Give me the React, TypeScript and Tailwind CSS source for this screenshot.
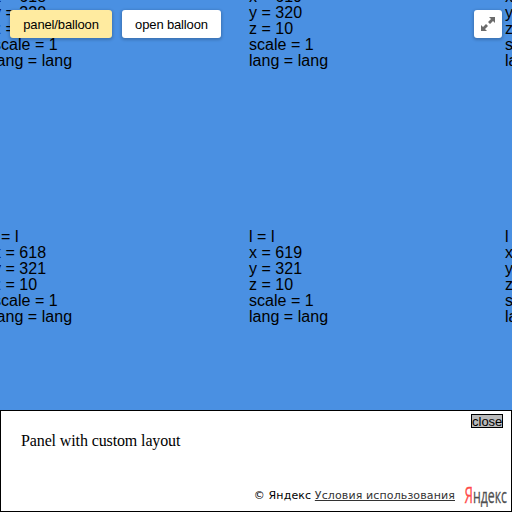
const columns = [618, 619, 620];
const rows = [320, 321];

function Tile({ x, y }: { x: number; y: number }) {
  return (
    <div className="h-64 w-64 whitespace-nowrap text-[16px] leading-4 tracking-[0.03px]">
      <div>l = l</div>
      <div>x = {x}</div>
      <div>y = {y}</div>
      <div>z = 10</div>
      <div>scale = 1</div>
      <div>lang = lang</div>
    </div>
  );
}

function MapTiles() {
  return (
    <div className="absolute inset-0 overflow-hidden">
      <div className="-mt-[27px] -ml-[7px] grid w-[768px] grid-cols-3">
        {rows.map((y) => columns.map((x) => <Tile key={`${x}-${y}`} x={x} y={y} />))}
      </div>
    </div>
  );
}

const buttonBase =
  "h-7 rounded-[3px] text-[13px] tracking-[-0.14px] shadow-[0_1px_3px_1px_rgba(0,0,0,0.2)]";

function Logo() {
  return (
    <svg width="44" height="24" viewBox="0 0 44 24" className="block">
      <g fontFamily="Open Sans, sans-serif">
        <text x="0.5" y="16.5" fontSize="21" fill="#ff4b4b" stroke="#ff4b4b" strokeWidth="0.3" textLength="8.5" lengthAdjust="spacingAndGlyphs">Я</text>
        <text x="9" y="16.5" fontSize="19.5" fill="#505050" stroke="#505050" strokeWidth="0.3" textLength="34" lengthAdjust="spacingAndGlyphs">ндекс</text>
      </g>
    </svg>
  );
}

export default function App() {
  return (
    <div className="relative flex h-[512px] w-[512px] flex-col justify-between overflow-hidden bg-[#4a90e2] font-['Liberation_Sans',Arial,sans-serif] text-black">
      <MapTiles />
      <div className="relative flex items-start gap-[10px] p-[10px]">
        <button className={`${buttonBase} w-[102px] bg-[#ffeba0] leading-[30px]`}>panel/balloon</button>
        <button className={`${buttonBase} w-[99px] bg-white leading-[30px]`}>open balloon</button>
        <button aria-label="Fullscreen" className={`${buttonBase} ml-auto flex w-7 items-center justify-center bg-white`}>
          <svg width="16" height="16" viewBox="0 0 16 16" fill="#6b6b6b">
            <path d="M9 1h6v6l-2-2-3 3-2-2 3-3zM1 9l2 2 3-3 2 2-3 3 2 2H1z" />
          </svg>
        </button>
      </div>
      <div className="relative flex h-[102px] flex-col justify-between border border-black bg-white">
        <div className="flex items-start justify-between">
          <div className="mt-[21px] ml-5 font-['Liberation_Serif',serif] text-[16px] leading-[18px] tracking-[-0.12px]">Panel with custom layout</div>
          <button className="mt-[3px] mr-2 h-[14px] w-8 border border-black bg-[#bbb] text-[13px] leading-[14px]">close</button>
        </div>
        <div className="flex items-end justify-end">
          <div className="mr-[9px] mb-[8px] whitespace-nowrap font-['DejaVu_Sans',sans-serif] text-[11px] leading-[14px] tracking-[0.12px]">
            © Яндекс <a className="text-[#333] underline">Условия использования</a>
          </div>
          <div className="mr-[3px] mb-[1px]"><Logo /></div>
        </div>
      </div>
    </div>
  );
}
